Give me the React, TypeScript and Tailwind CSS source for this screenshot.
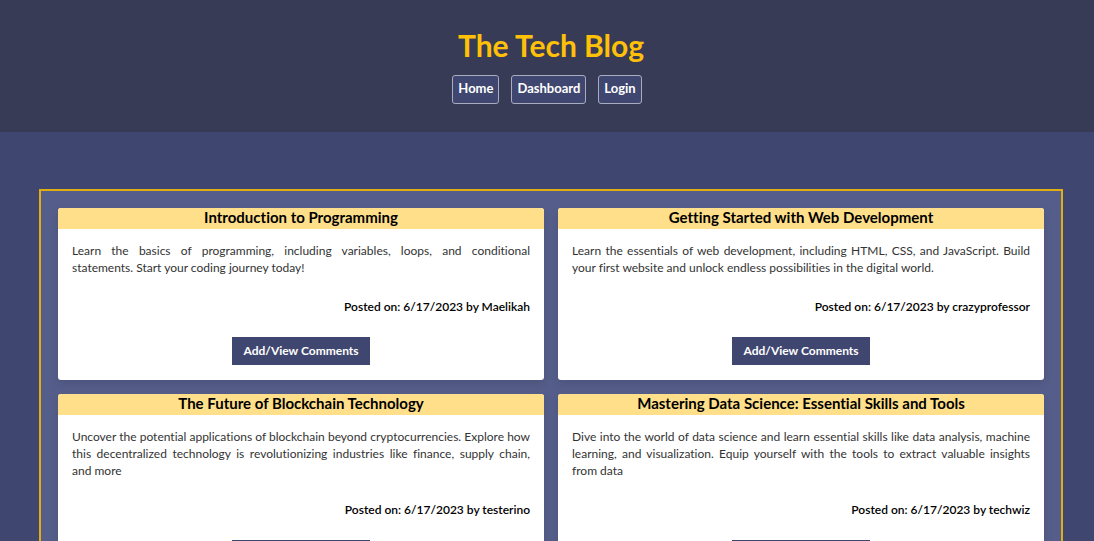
interface Post {
  title: string;
  body: string;
  date: string;
  author: string;
}

const posts: Post[] = [
  {
    title: "Introduction to Programming",
    body: "Learn the basics of programming, including variables, loops, and conditional statements.\u00a0Start your coding journey today!",
    date: "6/17/2023",
    author: "Maelikah",
  },
  {
    title: "Getting Started with Web Development",
    body: "Learn the essentials of web development, including HTML, CSS, and JavaScript. Build your first website and unlock endless possibilities in the digital world.",
    date: "6/17/2023",
    author: "crazyprofessor",
  },
  {
    title: "The Future of Blockchain Technology",
    body: "Uncover the potential applications of blockchain beyond cryptocurrencies. Explore how this decentralized technology is revolutionizing industries like finance, supply chain, and more",
    date: "6/17/2023",
    author: "testerino",
  },
  {
    title: "Mastering Data Science: Essential Skills and Tools",
    body: "Dive into the world of data science and learn essential skills like data analysis, machine learning, and visualization. Equip yourself with the tools to extract valuable insights from data",
    date: "6/17/2023",
    author: "techwiz",
  },
];

const links = ["Home", "Dashboard", "Login"];

function PostCard({ post }: { post: Post }) {
  return (
    <article className="flex flex-col overflow-hidden rounded-[3px] bg-white shadow-[0_4px_8px_rgba(0,0,0,0.1)]">
      <h2 className="bg-[#ffdf8a] pb-0.5 text-center text-[15px] leading-[19px] font-bold text-black">
        {post.title}
      </h2>
      <div className="flex flex-col px-3.5 pt-[13px] pb-[15px]">
        <p className="text-justify text-xs leading-[17px] text-[#333333]">{post.body}</p>
        <p className="mt-[22px] text-right text-xs leading-[17px] font-semibold text-black">
          Posted on: {post.date} by {post.author}
        </p>
        <button
          type="button"
          className="mt-[22px] h-7 self-center bg-[#3f4770] px-[11px] text-xs font-bold text-white"
        >
          Add/View Comments
        </button>
      </div>
    </article>
  );
}

export default function App() {
  return (
    <div className="min-h-screen bg-[#3f4770] font-['Lato','Liberation_Sans',sans-serif] [font-variant-ligatures:none]">
      <header className="flex flex-col items-center bg-[#373b56] pt-[27px] pb-7">
        <h1 className="pl-2 text-3xl leading-9 font-bold text-[#ffc107]">The Tech Blog</h1>
        <nav className="mt-3 flex gap-3">
          {links.map((link) => (
            <a
              key={link}
              href="#"
              className="flex h-[29px] items-center rounded-[3px] border border-[#a9acbe] bg-[#3f4770] px-[5px] pb-px text-[13px] font-bold text-white"
            >
              {link}
            </a>
          ))}
        </nav>
      </header>
      <main className="pt-[57px] pr-[31px] pb-14 pl-[39px]">
        <section className="grid grid-cols-2 gap-3.5 border-2 border-[#e0ae12] bg-[#555d8a] p-[17px]">
          {posts.map((post) => (
            <PostCard key={post.title} post={post} />
          ))}
        </section>
      </main>
    </div>
  );
}
